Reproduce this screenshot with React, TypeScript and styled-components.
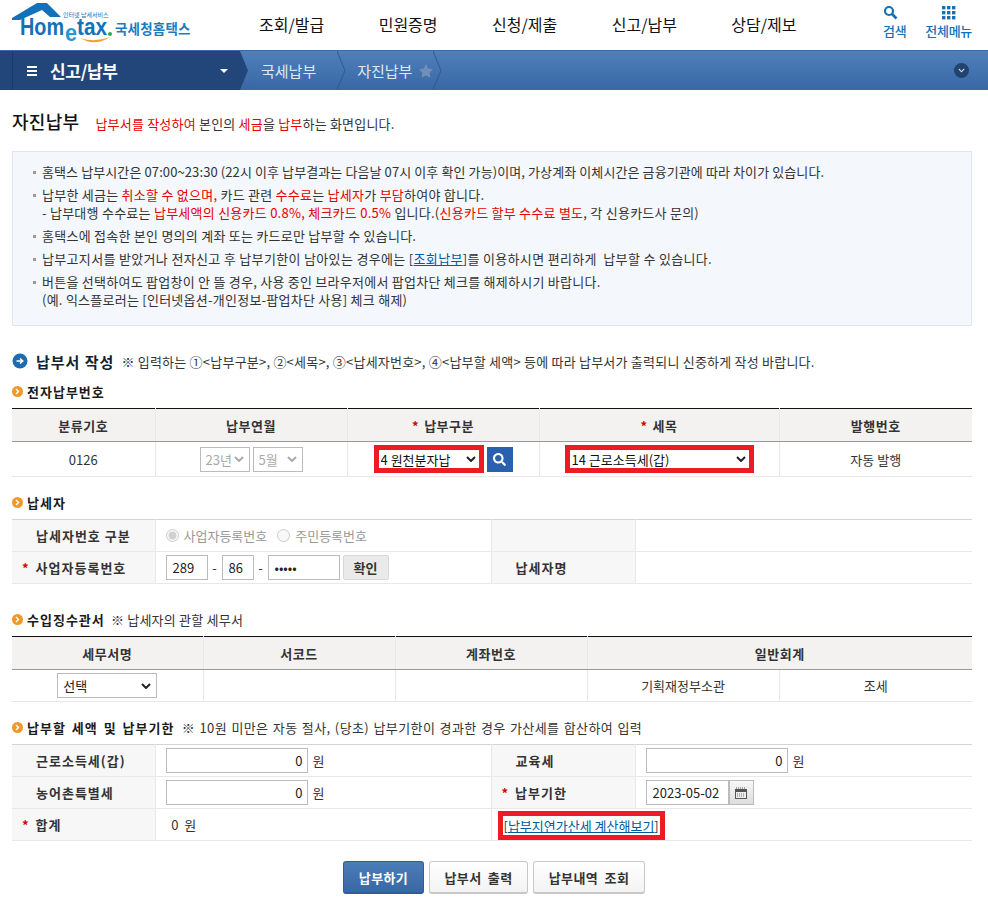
import React from 'react';
import styled, { createGlobalStyle } from 'styled-components';
import { FaSearch, FaStar, FaChevronDown } from 'react-icons/fa';

const GlobalStyle = createGlobalStyle`
    html, body {
        margin: 0;
        padding: 0;
        background: #fff;
        color: #333;
        font-family: "Noto Sans CJK KR", "Liberation Sans", sans-serif;
        font-size: 13px;
    }
    * { box-sizing: border-box; }
`;

const chevron = (color: string) =>
    `url("data:image/svg+xml,%3Csvg xmlns='http://www.w3.org/2000/svg' viewBox='0 0 10 6'%3E%3Cpath d='M1 1 L5 5 L9 1' fill='none' stroke='${color.replace('#', '%23')}' stroke-width='2'/%3E%3C/svg%3E")`;

const Header = styled.header`
    height: 50px;
    display: flex;
    align-items: flex-start;
    padding-left: 12px;
`;

const LogoBox = styled.div`
    width: 247px;
    height: 50px;
    flex: none;
`;

const Nav = styled.nav`
    height: 50px;
    flex: none;
    display: flex;
    gap: 54.5px;
    align-items: center;
    padding-bottom: 2px;
`;

const NavItem = styled.a`
    flex: none;
    font-size: 16px;
    color: #111;
    white-space: nowrap;
`;

const TopTools = styled.div`
    margin-left: auto;
    padding-right: 16px;
    padding-top: 5px;
    display: flex;
    gap: 19px;
`;

const TopTool = styled.a`
    display: flex;
    flex-direction: column;
    align-items: center;
    gap: 1px;
    color: #1271b9;
    font-size: 13px;
    font-weight: 500;
    line-height: 18px;
    letter-spacing: -0.3px;
    svg { height: 16px; display: block; }
`;

const SearchTool = styled(TopTool)`
    align-items: flex-start;
`;

const CrumbBar = styled.div`
    height: 40px;
    display: flex;
    align-items: center;
    background: linear-gradient(#4d80bb, #3a67a5);
    border-top: 1px solid #3c6aa5;
    color: #e8eff8;
    padding-right: 20px;
`;

const MenuBlock = styled.div`
    width: 248px;
    height: 100%;
    flex: none;
    display: flex;
    align-items: center;
    padding: 0 20px 0 27px;
    background: linear-gradient(to right, #23467a 12px, #1b3a68 12px, #1b3a68 13px, #23467a 13px);
    clip-path: polygon(0 0, 240px 0, 248px 50%, 240px 100%, 0 100%);
`;

const MenuTitle = styled.span`
    margin-left: 13px;
    font-size: 17px;
    font-weight: 700;
    color: #fff;
    letter-spacing: -0.3px;
`;

const Caret = styled.span`
    margin-left: auto;
    width: 0;
    height: 0;
    border-left: 4px solid transparent;
    border-right: 4px solid transparent;
    border-top: 4px solid #fff;
`;

const Crumb = styled.span`
    margin-left: 13px;
    font-size: 15px;
    white-space: nowrap;
    color: #dfe8f4;
`;

const CrumbSep = styled.svg<{ $gap: number }>`
    width: 9px;
    height: 39px;
    margin: 0 -2px 0 ${({ $gap }) => $gap}px;
    flex: none;
`;

const CrumbStar = styled(FaStar)`
    margin-left: 7px;
    color: #6f8fb8;
    font-size: 14px;
`;

const RoundDown = styled.span`
    margin-left: auto;
    margin-right: -1px;
    width: 15px;
    height: 15px;
    border-radius: 50%;
    background: #23436f;
    color: #d6e0ee;
    display: flex;
    align-items: center;
    justify-content: center;
    font-size: 7px;
`;

const Page = styled.main`
    padding: 0 16px 0 12px;
`;

const TitleRow = styled.div`
    height: 61px;
    display: flex;
    align-items: baseline;
    padding-top: 18px;
`;

const PageTitle = styled.h1`
    margin: 0;
    font-size: 18px;
    font-weight: 500;
    color: #111;
    letter-spacing: 0.3px;
`;

const TitleNote = styled.p`
    margin: 0 0 0 16px;
    font-size: 13px;
    color: #333;
    letter-spacing: 0.2px;
`;

const Red = styled.span`
    color: #e60000;
`;

const NoticeBox = styled.div`
    height: 175px;
    background: #f4f7fc;
    border: 1px solid #dfe6f0;
    padding: 11px 20px 0 20px;
`;

const NoticeItem = styled.div<{ $ls?: number }>`
    position: relative;
    padding-left: 9px;
    margin-bottom: 5px;
    line-height: 18px;
    color: #333;
    font-size: 13px;
    white-space: nowrap;
    letter-spacing: ${({ $ls }) => $ls ?? 0.25}px;
    &::before {
        content: '';
        position: absolute;
        left: 0;
        top: 8px;
        width: 3px;
        height: 3px;
        background: #999;
    }
`;

const Link = styled.a`
    color: #005a9c;
    text-decoration: underline;
`;

const MainHeading = styled.div`
    margin-top: 25px;
    height: 20px;
    display: flex;
    align-items: center;
    gap: 8px;
`;

const HeadIcon = styled.svg`
    width: 16px;
    height: 16px;
    flex: none;
`;

const MainHeadingText = styled.strong`
    font-size: 15px;
    color: #123;
    letter-spacing: 1px;
    white-space: nowrap;
`;

const HeadNote = styled.span<{ $wide?: boolean }>`
    font-size: 13px;
    color: #333;
    white-space: nowrap;
    margin-left: -1px;
    letter-spacing: ${({ $wide }) => ($wide ? '0.4px' : '0.22px')};
    word-spacing: ${({ $wide }) => ($wide ? '1px' : '0')};
`;

const SubHeading = styled.div<{ $top: number }>`
    margin-top: ${({ $top }) => $top}px;
    height: 16px;
    display: flex;
    align-items: center;
    gap: 4px;
`;

const BulletIcon = styled.svg`
    width: 11px;
    height: 11px;
    flex: none;
`;

const SubHeadingText = styled.strong`
    font-size: 13px;
    color: #1a1a1a;
    white-space: nowrap;
    letter-spacing: 1px;
    word-spacing: 2px;
`;

const Table = styled.table<{ $top?: boolean }>`
    width: 960px;
    margin-top: 9px;
    table-layout: fixed;
    border-collapse: collapse;
    border-top: ${({ $top }) => ($top ? '1px solid #111' : '1px solid #d4d4d4')};
`;

const Col = styled.col<{ $w: number }>`
    width: ${({ $w }) => $w}px;
`;

const HeadCell = styled.th`
    height: 33px;
    background: #f3f2f0;
    border-bottom: 1px solid #999;
    border-right: 1px solid #e8e8e8;
    font-size: 13px;
    font-weight: 700;
    color: #333;
    padding: 0;
    letter-spacing: 0.5px;
    &:last-child { border-right: 0; }
`;

const BodyCell = styled.td<{ $h?: number; $left?: boolean }>`
    height: ${({ $h }) => $h ?? 35}px;
    border-bottom: 1px solid #e8e8e8;
    border-right: 1px solid #e8e8e8;
    text-align: ${({ $left }) => ($left ? 'left' : 'center')};
    padding: ${({ $left }) => ($left ? '0 0 0 10px' : '0')};
    font-size: 13px;
    color: #333;
    white-space: nowrap;
    &:last-child { border-right: 0; }
`;

const LabelCell = styled.th`
    height: 32px;
    background: #f7f7f7;
    border-bottom: 1px solid #e8e8e8;
    border-right: 1px solid #e8e8e8;
    text-align: left;
    padding-left: 24px;
    font-size: 13px;
    font-weight: 700;
    color: #333;
    white-space: nowrap;
    letter-spacing: 1px;
`;

const Star = styled.span`
    color: #d40000;
    font-weight: 700;
    margin-right: 5px;
`;

const LabelStar = styled(Star)`
    margin-left: -14px;
    margin-right: 6px;
`;

const FormLine = styled.div`
    display: flex;
    align-items: center;
    justify-content: center;
    gap: 3px;
`;

const LeftLine = styled(FormLine)`
    justify-content: flex-start;
`;

const RedBox = styled.span`
    display: inline-flex;
    border: 5px solid #ed1c24;
    background: #fff;
`;

const LinkBox = styled(RedBox)`
    margin: 2px 0 0 -4px;
    padding: 0 1px;
    line-height: 19px;
`;

const PlainSelect = styled.select<{ $w: number }>`
    width: ${({ $w }) => $w}px;
    height: 25px;
    appearance: none;
    border: 1px solid #bbb;
    border-radius: 0;
    background: #fff ${chevron('#222')} no-repeat right 5px center / 10px 6px;
    font-family: inherit;
    font-size: 13px;
    color: #222;
    padding: 0 0 0 5px;
    &:disabled {
        color: #aaa;
        opacity: 1;
        background-image: ${chevron('#aaa')};
    }
`;

const BoxedSelect = styled(PlainSelect)`
    height: 18px;
    border: 0;
    padding: 0 0 0 2px;
    color: #111;
    outline: 0;
    background-position: right 3px center;
`;

const SearchButton = styled.button`
    width: 26px;
    height: 25px;
    border: 0;
    padding: 0;
    background: #2a60b0;
    color: #fff;
    font-size: 13px;
    display: flex;
    align-items: center;
    justify-content: center;
`;

const RadioLabel = styled.label`
    display: inline-flex;
    align-items: center;
    gap: 5px;
    color: #999;
    margin-right: 10px;
`;

const Radio = styled.input`
    margin: 0;
    width: 13px;
    height: 13px;
`;

const TextInput = styled.input<{ $w: number; $right?: boolean }>`
    width: ${({ $w }) => $w}px;
    height: 25px;
    border: 1px solid #bbb;
    background: #fff;
    font-family: inherit;
    font-size: 13px;
    color: #222;
    padding: 0 4px 0 6px;
    text-align: ${({ $right }) => ($right ? 'right' : 'left')};
    outline: 0;
`;

const Dash = styled.span`
    width: 8px;
    text-align: center;
`;

const GreyButton = styled.button`
    width: 46px;
    height: 25px;
    border: 1px solid #d8d8d8;
    border-radius: 2px;
    background: #eaeaea;
    font-family: inherit;
    font-size: 13px;
    font-weight: 700;
    color: #333;
    padding: 0;
`;

const CalButton = styled.span`
    width: 25px;
    height: 25px;
    margin-left: -3px;
    border: 1px solid #bbb;
    background: linear-gradient(#f8f8f8, #ddd);
    display: flex;
    align-items: center;
    justify-content: center;
`;

const Won = styled.span`
    margin-left: 2px;
`;

const ButtonRow = styled.div`
    margin-top: 20px;
    display: flex;
    gap: 5px;
    padding-left: 331px;
`;

const ActionButton = styled.button<{ $primary?: boolean; $w: number }>`
    width: ${({ $w }) => $w}px;
    height: 33px;
    border-radius: 3px;
    border: 1px solid ${({ $primary }) => ($primary ? '#2f5d9c' : '#c8c8c8')};
    border-bottom-width: 2px;
    background: ${({ $primary }) => ($primary ? 'linear-gradient(#4a7db8, #3a67a5)' : 'linear-gradient(#fff, #f3f3f3)')};
    color: ${({ $primary }) => ($primary ? '#fff' : '#333')};
    font-family: inherit;
    font-size: 13px;
    font-weight: 700;
    letter-spacing: 0.4px;
    word-spacing: 3px;
    padding: 0;
`;

const Logo = () => (
    <svg width="190" height="46" viewBox="0 0 190 46">
        <path d="M0 18 L25 3 L35 3 L49 17 L38 17 L30 10 L8 20 L0 20 Z" fill="#1271b9" />
        <text x="8" y="35" textLength="44" lengthAdjust="spacingAndGlyphs" fontFamily="Liberation Sans, sans-serif" fontSize="24" fontWeight="700" fill="#1271b9">Hom</text>
        <text x="53" y="41" textLength="12" lengthAdjust="spacingAndGlyphs" fontFamily="Liberation Sans, sans-serif" fontSize="24" fontWeight="700" fill="#1f9ad6">e</text>
        <text x="65" y="35" textLength="30" lengthAdjust="spacingAndGlyphs" fontFamily="Liberation Sans, sans-serif" fontSize="24" fontWeight="700" fill="#1271b9">tax</text>
        <circle cx="98" cy="34" r="2" fill="#2fa84f" />
        <path d="M68 38 Q83 47 98 37 Q83 43 68 38 Z" fill="#f0a030" />
        <text x="51" y="17" fontSize="6" fill="#1271b9" fontFamily="Noto Sans CJK KR, sans-serif">인터넷 납세서비스</text>
        <text x="103" y="33.5" fontSize="13.5" fontWeight="700" letterSpacing="0.2" fill="#1c7cc0" fontFamily="Noto Sans CJK KR, sans-serif">국세청홈택스</text>
    </svg>
);

const SearchGlyph = () => (
    <svg viewBox="0 0 16 16" width="16" height="16">
        <circle cx="6" cy="6" r="4" fill="none" stroke="#1271b9" strokeWidth="2.2" />
        <path d="M9 9 L13.5 13.5" stroke="#1271b9" strokeWidth="2.6" />
    </svg>
);

const GridGlyph = () => (
    <svg viewBox="0 0 14 14" width="14" height="16" fill="#1271b9">
        {[0, 5, 10].map((y) => [0, 5, 10].map((x) => <rect key={`${x}-${y}`} x={x} y={y} width="3.4" height="3.4" />))}
    </svg>
);

const Sep = ({ gap }: { gap: number }) => (
    <CrumbSep viewBox="0 0 9 39" $gap={gap}>
        <path d="M0 0 L8 19.5 L0 39" fill="none" stroke="#2d5a94" strokeWidth="1" />
    </CrumbSep>
);

const ArrowIcon = () => (
    <HeadIcon viewBox="0 0 16 16">
        <circle cx="8" cy="8" r="7.5" fill="#1c6cb0" />
        <path d="M4.5 8 H10 M8 5.5 L10.8 8 L8 10.5" stroke="#fff" strokeWidth="1.5" fill="none" />
    </HeadIcon>
);

const Bullet = () => (
    <BulletIcon viewBox="0 0 11 11">
        <circle cx="5.5" cy="5.5" r="5.5" fill="#f0982a" />
        <path d="M4 3 L6.5 5.5 L4 8" stroke="#fff" strokeWidth="1.4" fill="none" />
    </BulletIcon>
);

const CalGlyph = () => (
    <svg viewBox="0 0 12 12" width="12" height="12">
        <path d="M1 1 H11" stroke="#555" strokeDasharray="1 1" />
        <rect x="0.5" y="2.5" width="11" height="9" fill="#eee" stroke="#555" />
        <rect x="1" y="3" width="10" height="2" fill="#555" />
        <path d="M2 7 H10 M2 9 H10" stroke="#777" strokeDasharray="1 1" />
    </svg>
);

const App: React.FC = () => {
    return (
        <>
            <GlobalStyle />
            <Header>
                <LogoBox><Logo /></LogoBox>
                <Nav>
                    <NavItem>조회/발급</NavItem>
                    <NavItem>민원증명</NavItem>
                    <NavItem>신청/제출</NavItem>
                    <NavItem>신고/납부</NavItem>
                    <NavItem>상담/제보</NavItem>
                </Nav>
                <TopTools>
                    <SearchTool><SearchGlyph />검색</SearchTool>
                    <TopTool><GridGlyph />전체메뉴</TopTool>
                </TopTools>
            </Header>

            <CrumbBar>
                <MenuBlock>
                    <svg width="10" height="10" viewBox="0 0 10 10" fill="#fff">
                        <rect y="0" width="10" height="2" />
                        <rect y="4" width="10" height="2" />
                        <rect y="8" width="10" height="2" />
                    </svg>
                    <MenuTitle>신고/납부</MenuTitle>
                    <Caret />
                </MenuBlock>
                <Crumb>국세납부</Crumb>
                <Sep gap={21} />
                <Crumb>자진납부</Crumb>
                <CrumbStar />
                <Sep gap={0} />
                <RoundDown><FaChevronDown /></RoundDown>
            </CrumbBar>

            <Page>
                <TitleRow>
                    <PageTitle>자진납부</PageTitle>
                    <TitleNote>
                        <Red>납부서를 작성하여</Red> 본인의 <Red>세금</Red>을 <Red>납부</Red>하는 화면입니다.
                    </TitleNote>
                </TitleRow>

                <NoticeBox>
                    <NoticeItem $ls={0.1}>홈택스 납부시간은 07:00~23:30 (22시 이후 납부결과는 다음날 07시 이후 확인 가능)이며, 가상계좌 이체시간은 금융기관에 따라 차이가 있습니다.</NoticeItem>
                    <NoticeItem>
                        납부한 세금는 <Red>취소할 수 없으며,</Red> 카드 관련 <Red>수수료</Red>는 <Red>납세자</Red>가 <Red>부담</Red>하여야 합니다.<br />
                        - 납부대행 수수료는 <Red>납부세액의 신용카드 0.8%, 체크카드 0.5%</Red> 입니다.(<Red>신용카드 할부 수수료 별도</Red>, 각 신용카드사 문의)
                    </NoticeItem>
                    <NoticeItem>홈택스에 접속한 본인 명의의 계좌 또는 카드로만 납부할 수 있습니다.</NoticeItem>
                    <NoticeItem $ls={0.33}>납부고지서를 받았거나 전자신고 후 납부기한이 남아있는 경우에는 [<Link>조회납부</Link>]를 이용하시면 편리하게 &nbsp;납부할 수 있습니다.</NoticeItem>
                    <NoticeItem>
                        버튼을 선택하여도 팝업창이 안 뜰 경우, 사용 중인 브라우저에서 팝업차단 체크를 해제하시기 바랍니다.<br />
                        (예. 익스플로러는 [인터넷옵션-개인정보-팝업차단 사용] 체크 해제)
                    </NoticeItem>
                </NoticeBox>

                <MainHeading>
                    <ArrowIcon />
                    <MainHeadingText>납부서 작성</MainHeadingText>
                    <HeadNote>※ 입력하는 ①&lt;납부구분&gt;, ②&lt;세목&gt;, ③&lt;납세자번호&gt;, ④&lt;납부할 세액&gt; 등에 따라 납부서가 출력되니 신중하게 작성 바랍니다.</HeadNote>
                </MainHeading>

                <SubHeading $top={12}>
                    <Bullet />
                    <SubHeadingText>전자납부번호</SubHeadingText>
                </SubHeading>
                <Table $top>
                    <colgroup>
                        <Col $w={143} /><Col $w={192} /><Col $w={192} /><Col $w={240} /><Col $w={193} />
                    </colgroup>
                    <thead>
                        <tr>
                            <HeadCell>분류기호</HeadCell>
                            <HeadCell>납부연월</HeadCell>
                            <HeadCell><Star>*</Star>납부구분</HeadCell>
                            <HeadCell><Star>*</Star>세목</HeadCell>
                            <HeadCell>발행번호</HeadCell>
                        </tr>
                    </thead>
                    <tbody>
                        <tr>
                            <BodyCell>0126</BodyCell>
                            <BodyCell>
                                <FormLine>
                                    <PlainSelect $w={50} disabled defaultValue="23"><option value="23">23년</option></PlainSelect>
                                    <PlainSelect $w={50} disabled defaultValue="5"><option value="5">5월</option></PlainSelect>
                                </FormLine>
                            </BodyCell>
                            <BodyCell>
                                <FormLine>
                                    <RedBox>
                                        <BoxedSelect $w={100} defaultValue="4"><option value="4">4 원천분자납</option></BoxedSelect>
                                    </RedBox>
                                    <SearchButton><FaSearch /></SearchButton>
                                </FormLine>
                            </BodyCell>
                            <BodyCell>
                                <FormLine>
                                    <RedBox>
                                        <BoxedSelect $w={179} defaultValue="14"><option value="14">14 근로소득세(갑)</option></BoxedSelect>
                                    </RedBox>
                                </FormLine>
                            </BodyCell>
                            <BodyCell>자동 발행</BodyCell>
                        </tr>
                    </tbody>
                </Table>

                <SubHeading $top={17}>
                    <Bullet />
                    <SubHeadingText>납세자</SubHeadingText>
                </SubHeading>
                <Table>
                    <colgroup>
                        <Col $w={143} /><Col $w={336} /><Col $w={144} /><Col $w={337} />
                    </colgroup>
                    <tbody>
                        <tr>
                            <LabelCell>납세자번호 구분</LabelCell>
                            <BodyCell $h={32} $left>
                                <RadioLabel><Radio type="radio" name="kind" disabled defaultChecked />사업자등록번호</RadioLabel>
                                <RadioLabel><Radio type="radio" name="kind" disabled />주민등록번호</RadioLabel>
                            </BodyCell>
                            <LabelCell />
                            <BodyCell $h={32} />
                        </tr>
                        <tr>
                            <LabelCell><LabelStar>*</LabelStar>사업자등록번호</LabelCell>
                            <BodyCell $h={32} $left>
                                <LeftLine>
                                    <TextInput $w={42} defaultValue="289" />
                                    <Dash>-</Dash>
                                    <TextInput $w={32} defaultValue="86" />
                                    <Dash>-</Dash>
                                    <TextInput $w={72} type="password" defaultValue="12345" />
                                    <GreyButton>확인</GreyButton>
                                </LeftLine>
                            </BodyCell>
                            <LabelCell>납세자명</LabelCell>
                            <BodyCell $h={32} />
                        </tr>
                    </tbody>
                </Table>

                <SubHeading $top={27}>
                    <Bullet />
                    <SubHeadingText>수입징수관서</SubHeadingText>
                    <HeadNote>&nbsp;※ 납세자의 관할 세무서</HeadNote>
                </SubHeading>
                <Table $top>
                    <colgroup>
                        <Col $w={191} /><Col $w={192} /><Col $w={192} /><Col $w={192} /><Col $w={193} />
                    </colgroup>
                    <thead>
                        <tr>
                            <HeadCell>세무서명</HeadCell>
                            <HeadCell>서코드</HeadCell>
                            <HeadCell>계좌번호</HeadCell>
                            <HeadCell colSpan={2}>일반회계</HeadCell>
                        </tr>
                    </thead>
                    <tbody>
                        <tr>
                            <BodyCell $h={32}>
                                <PlainSelect $w={100} defaultValue="0"><option value="0">선택</option></PlainSelect>
                            </BodyCell>
                            <BodyCell $h={32} />
                            <BodyCell $h={32} />
                            <BodyCell $h={32}>기획재정부소관</BodyCell>
                            <BodyCell $h={32}>조세</BodyCell>
                        </tr>
                    </tbody>
                </Table>

                <SubHeading $top={17}>
                    <Bullet />
                    <SubHeadingText>납부할 세액 및 납부기한</SubHeadingText>
                    <HeadNote $wide>&nbsp;※ 10원 미만은 자동 절사, (당초) 납부기한이 경과한 경우 가산세를 합산하여 입력</HeadNote>
                </SubHeading>
                <Table>
                    <colgroup>
                        <Col $w={143} /><Col $w={336} /><Col $w={144} /><Col $w={337} />
                    </colgroup>
                    <tbody>
                        <tr>
                            <LabelCell>근로소득세(갑)</LabelCell>
                            <BodyCell $h={32} $left>
                                <LeftLine><TextInput $w={142} $right defaultValue="0" /><Won>원</Won></LeftLine>
                            </BodyCell>
                            <LabelCell>교육세</LabelCell>
                            <BodyCell $h={32} $left>
                                <LeftLine><TextInput $w={142} $right defaultValue="0" /><Won>원</Won></LeftLine>
                            </BodyCell>
                        </tr>
                        <tr>
                            <LabelCell>농어촌특별세</LabelCell>
                            <BodyCell $h={32} $left>
                                <LeftLine><TextInput $w={142} $right defaultValue="0" /><Won>원</Won></LeftLine>
                            </BodyCell>
                            <LabelCell><LabelStar>*</LabelStar>납부기한</LabelCell>
                            <BodyCell $h={32} $left>
                                <LeftLine>
                                    <TextInput $w={83} defaultValue="2023-05-02" />
                                    <CalButton><CalGlyph /></CalButton>
                                </LeftLine>
                            </BodyCell>
                        </tr>
                        <tr>
                            <LabelCell><LabelStar>*</LabelStar>합계</LabelCell>
                            <BodyCell $h={32} $left>&nbsp;&nbsp;0 &nbsp;원</BodyCell>
                            <BodyCell $h={32} colSpan={2} $left>
                                <LeftLine>
                                    <LinkBox>[<Link>납부지연가산세 계산해보기</Link>]</LinkBox>
                                </LeftLine>
                            </BodyCell>
                        </tr>
                    </tbody>
                </Table>

                <ButtonRow>
                    <ActionButton $primary $w={81}>납부하기</ActionButton>
                    <ActionButton $w={99}>납부서 출력</ActionButton>
                    <ActionButton $w={112}>납부내역 조회</ActionButton>
                </ButtonRow>
            </Page>
        </>
    );
};

export default App;
